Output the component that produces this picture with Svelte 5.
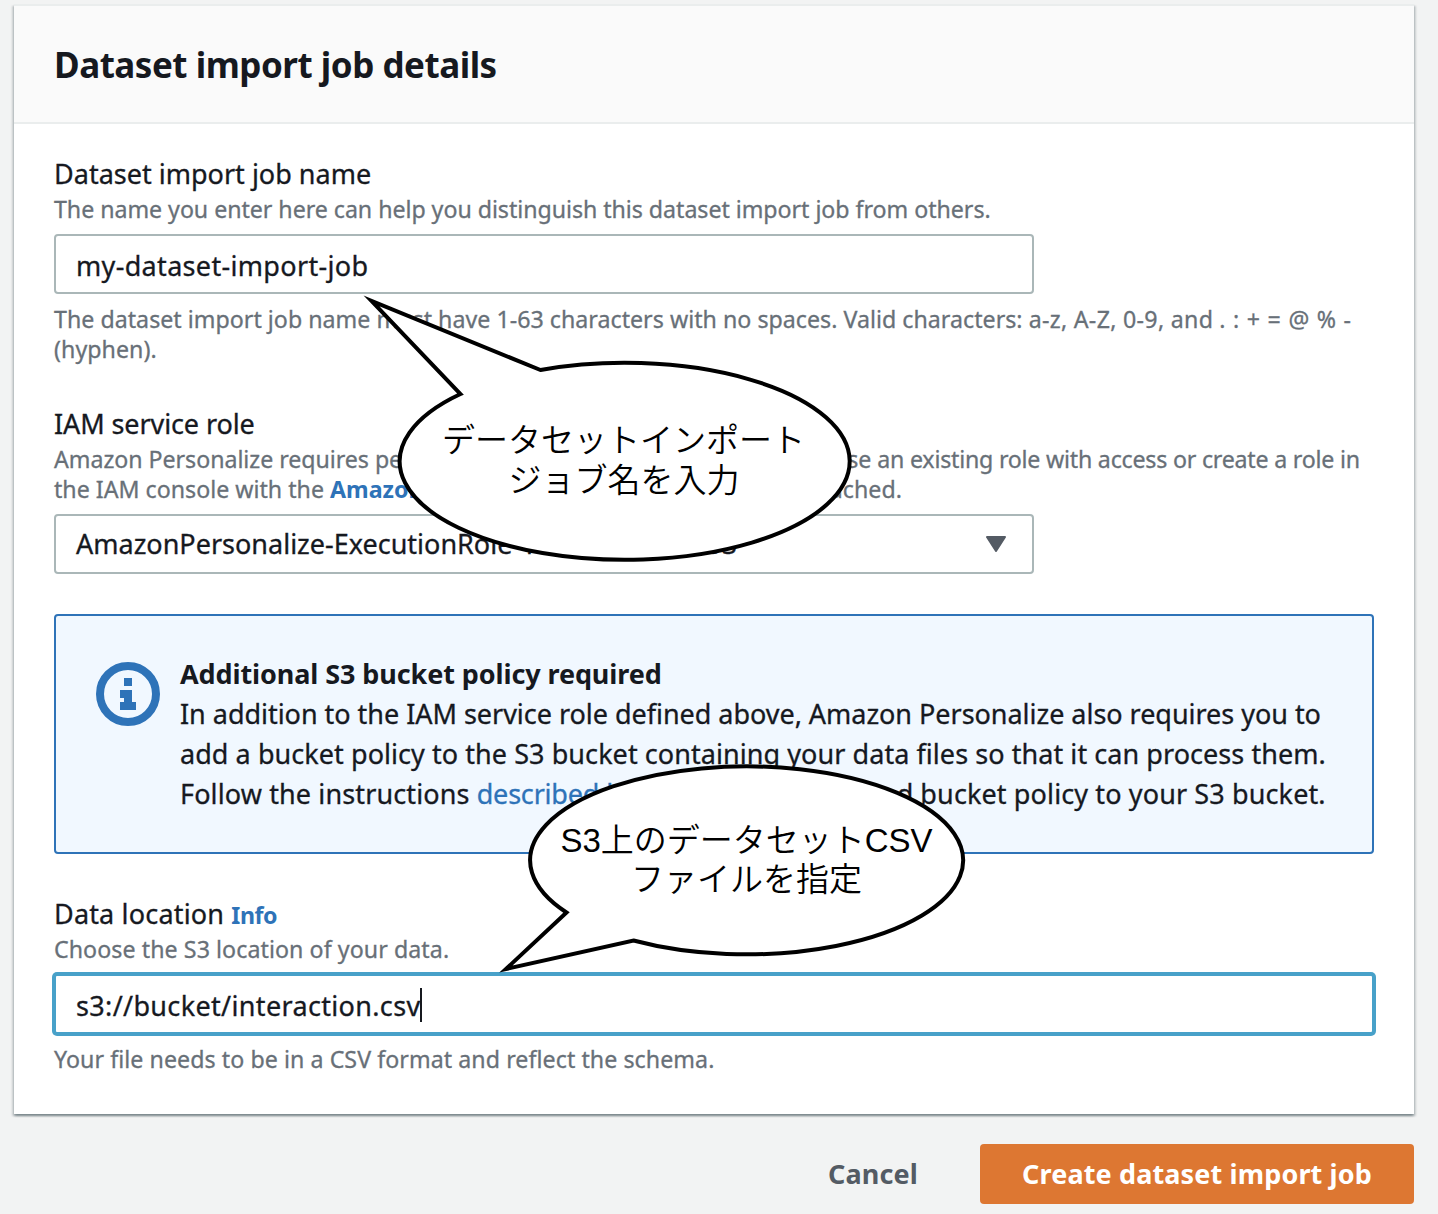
<script>
  let jobName = 'my-dataset-import-job';
  let role = 'AmazonPersonalize-ExecutionRole-15761372010553';
  let location = 's3://bucket/interaction.csv';
</script>

<main class="page">
  <section class="card">
    <header class="card-header"><h2>Dataset import job details</h2></header>

    <div class="card-body">
      <div class="field">
        <div class="label t-name">Dataset import job name</div>
        <div class="note t-help">The name you enter here can help you distinguish this dataset import job from others.</div>
        <div class="control short t-job">{jobName}</div>
        <div class="note t-rule">The dataset import job name must have 1-63 characters with no spaces. Valid characters: <span class="t-ranges">a-z, A-Z, 0-9, and</span> <span class="t-symbols">. : + = @ % -</span><br /><span class="t-hyphen">(hyphen).</span></div>
      </div>

      <div class="field">
        <div class="label t-service">IAM service role</div>
        <div class="note t-iam">Amazon Personalize requires permissions to access your S3 bucket. Choose <span class="t-existing">an existing role with access or create a role in</span><br /><span class="t-console">the IAM console with the <b class="link">AmazonPersonalizeFullAccess</b> IAM policy attached.</span></div>
        <div class="control short select">
          <span>{role}</span>
          <svg class="caret" viewBox="0 0 20 16" width="20" height="16"><path d="M1 1H19L10 15Z" /></svg>
        </div>
      </div>

      <div class="alert">
        <svg class="info-icon" viewBox="0 0 64 64" width="64" height="64">
          <circle cx="32" cy="32" r="28" />
          <path d="M28 16h8v8h-8zM24 28h12v12h4v8H24v-8h4v-4h-4z" />
        </svg>
        <div class="alert-text">
          <b class="t-alert">Additional S3 bucket policy required</b>
          <span class="t-addition">In addition to the IAM service role defined above, Amazon Personalize also requires you to</span>
          <span class="t-add">add a bucket policy to the S3 bucket containing your data files so that it can process them.</span>
          <span class="t-follow">Follow the instructions <span class="link t-described">described</span> <span class="t-here"><span class="link">here</span> to add the required</span> bucket policy to your S3 bucket.</span>
        </div>
      </div>

      <div class="field">
        <div class="label t-data">Data location <b class="info link">Info</b></div>
        <div class="note t-choose">Choose the S3 location of your data.</div>
        <div class="control focused t-s3">{location}<i class="cursor"></i></div>
        <div class="note t-file">Your file needs to be in a CSV format and reflect the schema.</div>
      </div>
    </div>
  </section>

  <footer class="actions">
    <button class="cancel">Cancel</button>
    <button class="primary">Create dataset import job</button>
  </footer>

  <svg class="callouts" viewBox="0 0 1438 1214" width="1438" height="1214">
    <path d="M540.5 370A225 98.5 0 1 1 460.5 394L371.5 301Z" />
    <text x="623.5" y="452">データセットインポート</text>
    <text x="624" y="492">ジョブ名を入力</text>
    <path d="M633.5 940.5A216.5 94 0 1 0 566.5 912.5L506 969Z" />
    <text x="746.5" y="851.5">S3上のデータセットCSV</text>
    <text x="746.5" y="891">ファイルを指定</text>
  </svg>
</main>

<style>
  :global(body) { background: #f2f3f3; }
  .page {
    position: relative;
    box-sizing: border-box;
    width: 1438px;
    height: 1214px;
    padding: 4px 24px 0 14px;
    overflow: hidden;
    font: 27px/40px "Noto Sans", "Open Sans", sans-serif;
    color: #16191f;
    white-space: nowrap;
  }
  .card {
    background: #fff;
    border-top: 2px solid #eaeded;
    box-shadow: 0 2px 2px 0 rgba(0, 28, 36, .3), 2px 2px 2px 0 rgba(0, 28, 36, .15), -2px 2px 2px 0 rgba(0, 28, 36, .15);
  }
  .card-header {
    box-sizing: border-box;
    height: 118px;
    padding: 37px 40px 0;
    background: #fafafa;
    border-bottom: 2px solid #eaeded;
  }
  h2 { margin: 0; font-size: 35px; line-height: 44px; letter-spacing: -.48px; }
  .card-body {
    display: flex;
    flex-direction: column;
    gap: 40px;
    padding: 30px 40px 40px;
    -webkit-text-stroke-width: .3px;
  }
  .card-body b { -webkit-text-stroke-width: 0; }
  .note { font-size: 23.2px; line-height: 30px; color: #687078; }
  .control {
    display: flex;
    align-items: center;
    box-sizing: border-box;
    height: 60px;
    margin: 10px 0;
    padding: 3px 20px 0;
    border: 2px solid #aab7b8;
    border-radius: 4px;
    background: #fff;
  }
  .short { width: 980px; }
  .select { justify-content: space-between; margin-bottom: 0; padding: 0 26px 0 20px; }
  .caret { fill: #545b64; stroke: #545b64; stroke-width: 2; stroke-linejoin: round; }
  .focused { border-color: #48a1c9; box-shadow: 0 0 0 2px #48a1c9; border-radius: 3px; }
  .cursor { width: 2px; height: 34px; margin: -2px 0 0 -1px; background: #16191f; }
  .link { color: #2e73b8; }
  .info { font-size: 23.2px; line-height: 0; letter-spacing: -.45px; }
  .alert {
    display: flex;
    gap: 20px;
    box-sizing: border-box;
    height: 240px;
    padding: 38px 40px;
    border: 2px solid #2e73b8;
    border-radius: 4px;
    background: #f1f8ff;
  }
  .info-icon { flex: none; margin-top: 8px; fill: #2e73b8; }
  .info-icon circle { fill: none; stroke: #2e73b8; stroke-width: 8; }
  .alert-text { display: flex; flex-direction: column; }
  .actions { display: flex; justify-content: flex-end; gap: 20px; margin-top: 30px; }
  button {
    height: 60px;
    padding: 0 42px;
    border: 0;
    border-radius: 4px;
    font: bold 27px/60px "Noto Sans", "Open Sans", sans-serif;
    letter-spacing: .13px;
  }
  .cancel { background: none; color: #545b64; }
  .primary { width: 434px; background: #dd7732; color: #fff; }
  .callouts { position: absolute; left: 0; top: 0; }
  .callouts path { fill: #fff; stroke: #000; stroke-width: 4; stroke-miterlimit: 20; }
  .callouts text {
    font: 350 33px "Liberation Sans", "Noto Sans CJK JP", sans-serif;
    text-anchor: middle;
  }

  /* tracking per line of copy */
  .t-name { letter-spacing: .01px; }
  .t-help { letter-spacing: -.04px; }
  .t-job { letter-spacing: .32px; }
  .t-rule { letter-spacing: .02px; }
  .t-ranges { letter-spacing: .3px; }
  .t-symbols { letter-spacing: .75px; }
  .t-hyphen { letter-spacing: .05px; }
  .t-service { letter-spacing: -.1px; }
  .t-iam { letter-spacing: -.04px; }
  .t-existing { letter-spacing: -.22px; }
  .t-console { letter-spacing: 0; }
  .t-alert { letter-spacing: -.1px; }
  .t-addition { letter-spacing: -.03px; }
  .t-add { letter-spacing: .06px; }
  .t-follow { letter-spacing: .12px; }
  .t-described { letter-spacing: -.2px; }
  .t-here { letter-spacing: -.15px; }
  .t-data { letter-spacing: .17px; }
  .t-choose { letter-spacing: .07px; }
  .t-s3 { letter-spacing: .34px; }
  .t-file { letter-spacing: .06px; }
</style>
